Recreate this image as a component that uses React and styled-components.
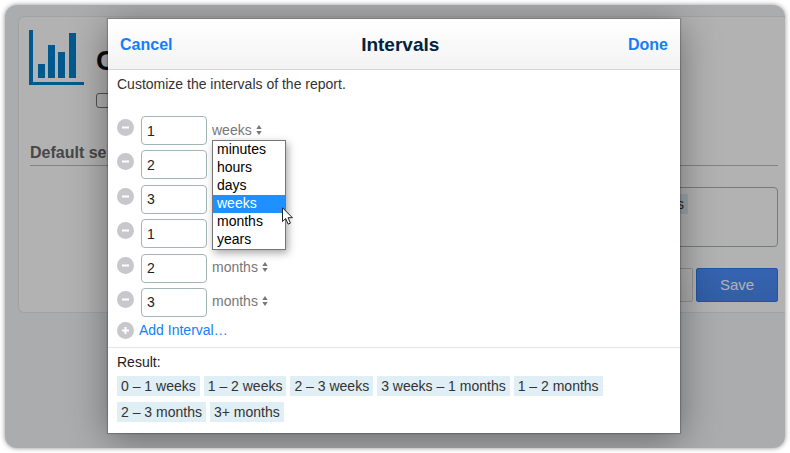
import React, { useState } from "react";
import styled, { createGlobalStyle } from "styled-components";

const GlobalStyle = createGlobalStyle`
  *, *::before, *::after { box-sizing: border-box; }
  body {
    margin: 0;
    background: #fff;
    color: #333;
    font: 14px/18px "Liberation Sans", Arial, sans-serif;
  }
  #root { display: flow-root; }
  button, input, select { font: inherit; }
`;

const Frame = styled.main`
  position: relative;
  margin: 5px;
  padding: 11px 0 135px 13px;
  border-radius: 12px;
  background: #f5f7fa;
  box-shadow: 0 0 5px rgba(0, 0, 0, 0.45);
  overflow: hidden;
`;

const Panel = styled.section`
  padding: 13px 7px 10px 10px;
  border: 1px solid #e6e8ea;
  border-right: 0;
  border-radius: 6px 0 0 6px;
  background: #fff;
`;

const ReportHead = styled.header`
  display: flex;
  gap: 12px;
`;

const ReportTitle = styled.h1`
  margin: 14px 0 15px;
  color: #111;
  font-size: 28px;
  line-height: 34px;
`;

const ShareBox = styled.input`
  display: block;
  appearance: none;
  width: 15px;
  height: 15px;
  margin: 0;
  border: 1px solid #767676;
  border-radius: 3px;
  background: #fff;
`;

const SectionTitle = styled.h2`
  margin: 35px 0 21px 1px;
  padding-bottom: 2px;
  border-bottom: 1px solid #b8bcbc;
  color: #666;
  font-size: 16px;
  line-height: 20px;
`;

const IntervalBox = styled.div`
  display: flex;
  justify-content: flex-end;
  align-items: flex-start;
  height: 60px;
  margin-left: 160px;
  padding: 6px 89px 6px 6px;
  border: 1px solid #a3b5b5;
  border-radius: 4px;
`;

const Tag = styled.span`
  padding: 1px 4px;
  background: #e0eef5;
  color: #333;
`;

const Actions = styled.div`
  display: flex;
  justify-content: flex-end;
  gap: 3px;
  margin-top: 21px;
`;

const ActionButton = styled.button`
  width: 82px;
  height: 34px;
  padding: 0;
  border: 1px solid ${(p) => (p.$primary ? "#3079ed" : "#d0d0d0")};
  border-radius: 2px;
  background: ${(p) =>
    p.$primary ? "linear-gradient(#4d90fe, #4787ed)" : "linear-gradient(#fff, #f6f6f6)"};
  color: #fff;
  font-size: 15px;
`;

const Overlay = styled.div`
  position: absolute;
  inset: 0;
  display: flex;
  align-items: flex-start;
  padding: 14px 105px 0 103px;
  background: rgba(0, 0, 0, 0.3);
`;

const Dialog = styled.div`
  flex: 1;
  min-width: 0;
  background: #fff;
  box-shadow: 0 0 1px 1px rgba(0, 0, 0, 0.2), 0 6px 36px rgba(0, 0, 0, 0.4);
`;

const DialogHeader = styled.header`
  display: flex;
  justify-content: space-between;
  align-items: center;
  height: 51px;
  padding: 1px 12px 0;
  border-bottom: 1px solid #d6d6d6;
  background: linear-gradient(#fff, #f3f3f3);
`;

const DialogTitle = styled.h2`
  margin: 0;
  color: #002340;
  font-size: 19px;
  line-height: 24px;
`;

const HeaderButton = styled.button`
  padding: 0;
  border: 0;
  background: none;
  color: #147efb;
  font-size: 16px;
  font-weight: bold;
`;

const DialogBody = styled.div`
  padding: 5px 9px 8px;
`;

const Intro = styled.p`
  margin: 0 0 23px;
`;

const IntervalList = styled.ul`
  display: flex;
  flex-direction: column;
  justify-content: space-between;
  min-height: 201px;
  margin: 0 0 4px;
  padding: 0;
  list-style: none;
`;

const IntervalRow = styled.li`
  display: flex;
  gap: 7px;
  height: 29px;
`;

const RoundButton = styled.button`
  display: flex;
  align-self: flex-start;
  margin: 3px 0 0;
  padding: 0;
  border: 0;
  background: none;
`;

const AmountInput = styled.input`
  width: 66px;
  height: 29px;
  padding: 0 5px;
  border: 1px solid #a3b5b5;
  border-radius: 4px;
  background: #fff;
  color: #222;
`;

const UnitField = styled.div`
  position: relative;
  display: flex;
  align-items: center;
  align-self: center;
  gap: 4px;
  margin-left: -2px;
  padding-bottom: 2px;
`;

const UnitSelect = styled.select`
  appearance: none;
  field-sizing: content;
  height: 18px;
  margin: 0;
  padding: 0;
  border: 0;
  background: none;
  color: #777;
`;

const Menu = styled.ul`
  position: absolute;
  z-index: 1;
  top: 19px;
  left: 0;
  width: 74px;
  margin: 0;
  padding: 0;
  border: 1px solid #767676;
  background: #fff;
  box-shadow: 2px 3px 8px rgba(0, 0, 0, 0.35);
  list-style: none;
`;

const MenuItem = styled.li`
  padding: 0 0 2px 4px;
  background: ${(p) => (p.$active ? "#1e90ff" : "#fff")};
  color: ${(p) => (p.$active ? "#fff" : "#000")};
  line-height: 16px;
`;

const Pointer = styled.svg`
  position: absolute;
  z-index: 2;
  top: 86px;
  left: 70px;
`;

const AddButton = styled.button`
  display: flex;
  align-items: center;
  gap: 5px;
  padding: 0;
  border: 0;
  background: none;
  color: #147efb;
`;

const Result = styled.section`
  padding: 5px 9px 11px;
  border-top: 1px solid #e6e6e6;
`;

const ResultLabel = styled.h3`
  margin: 0 0 5px;
  color: #222;
  font-size: 14px;
  font-weight: normal;
`;

const ResultTags = styled.div`
  display: flex;
  flex-wrap: wrap;
  gap: 6px 4px;
`;

const ChartLogo = () => (
  <svg width="55" height="55" viewBox="0 0 55 55" fill="#0080cc" aria-hidden="true">
    <path d="M0 0h4v52h51v3H0z" />
    <path d="M9 34h7v14H9zM19 15h7v33h-7zM29 22h7v26h-7zM40 3h7v45h-7z" />
  </svg>
);

const RoundIcon = ({ plus }) => (
  <svg width="17" height="17" viewBox="0 0 17 17" aria-hidden="true">
    <circle cx="8.5" cy="8.5" r="8.5" fill="#c7c7cc" />
    <path d={plus ? "M5 8.5h7M8.5 5v7" : "M5 8.5h7"} stroke="#fff" strokeWidth="2" />
  </svg>
);

const UpDown = () => (
  <svg width="6" height="10" viewBox="0 0 6 10" fill="#777" aria-hidden="true">
    <path d="M3 0L5.7 4H0.3zM3 10L5.7 6H0.3z" />
  </svg>
);

const UNITS = ["minutes", "hours", "days", "weeks", "months", "years"];
const START = [
  [1, "weeks"],
  [2, "weeks"],
  [3, "weeks"],
  [1, "months"],
  [2, "months"],
  [3, "months"],
];
const RESULTS = [
  "0 – 1 weeks",
  "1 – 2 weeks",
  "2 – 3 weeks",
  "3 weeks – 1 months",
  "1 – 2 months",
  "2 – 3 months",
  "3+ months",
];

export default function App() {
  const [rows, setRows] = useState(START);
  const update = (index, row) => setRows(rows.map((r, i) => (i === index ? row : r)));

  return (
    <>
      <GlobalStyle />
      <Frame>
        <Panel>
          <ReportHead>
            <ChartLogo />
            <div>
              <ReportTitle>C</ReportTitle>
              <ShareBox type="checkbox" aria-label="Report option" />
            </div>
          </ReportHead>
          <SectionTitle>Default se</SectionTitle>
          <IntervalBox>
            <Tag>s</Tag>
          </IntervalBox>
          <Actions>
            <ActionButton type="button" aria-label="Cancel" />
            <ActionButton type="button" $primary>Save</ActionButton>
          </Actions>
        </Panel>

        <Overlay>
          <Dialog role="dialog" aria-labelledby="dialog-title">
            <DialogHeader>
              <HeaderButton type="button">Cancel</HeaderButton>
              <DialogTitle id="dialog-title">Intervals</DialogTitle>
              <HeaderButton type="button">Done</HeaderButton>
            </DialogHeader>
            <DialogBody>
              <Intro>Customize the intervals of the report.</Intro>
              <IntervalList>
                {rows.map(([amount, unit], i) => (
                  <IntervalRow key={i}>
                    <RoundButton
                      type="button"
                      aria-label="Remove interval"
                      onClick={() => setRows(rows.filter((_, n) => n !== i))}
                    >
                      <RoundIcon />
                    </RoundButton>
                    <AmountInput
                      aria-label="Amount"
                      value={amount}
                      onChange={(e) => update(i, [e.target.value, unit])}
                    />
                    <UnitField>
                      <UnitSelect
                        aria-label="Unit"
                        value={unit}
                        onChange={(e) => update(i, [amount, e.target.value])}
                      >
                        {UNITS.map((u) => (
                          <option key={u}>{u}</option>
                        ))}
                      </UnitSelect>
                      <UpDown />
                      {i === 0 && (
                        <>
                          <Menu role="listbox" aria-label="Units">
                            {UNITS.map((u) => (
                              <MenuItem
                                key={u}
                                role="option"
                                aria-selected={u === unit}
                                $active={u === unit}
                                onClick={() => update(i, [amount, u])}
                              >
                                {u}
                              </MenuItem>
                            ))}
                          </Menu>
                          <Pointer width="12" height="18" viewBox="0 0 12 18" aria-hidden="true">
                            <path
                              d="M0.5 0.8v13.7l3.2-3 2.4 5.6 2.3-1-2.4-5.4h4.4z"
                              fill="#fff"
                              stroke="#222"
                            />
                          </Pointer>
                        </>
                      )}
                    </UnitField>
                  </IntervalRow>
                ))}
              </IntervalList>
              <AddButton type="button" onClick={() => setRows([...rows, [1, "months"]])}>
                <RoundIcon plus />
                Add Interval…
              </AddButton>
            </DialogBody>
            <Result>
              <ResultLabel>Result:</ResultLabel>
              <ResultTags>
                {RESULTS.map((text) => (
                  <Tag key={text}>{text}</Tag>
                ))}
              </ResultTags>
            </Result>
          </Dialog>
        </Overlay>
      </Frame>
    </>
  );
}
